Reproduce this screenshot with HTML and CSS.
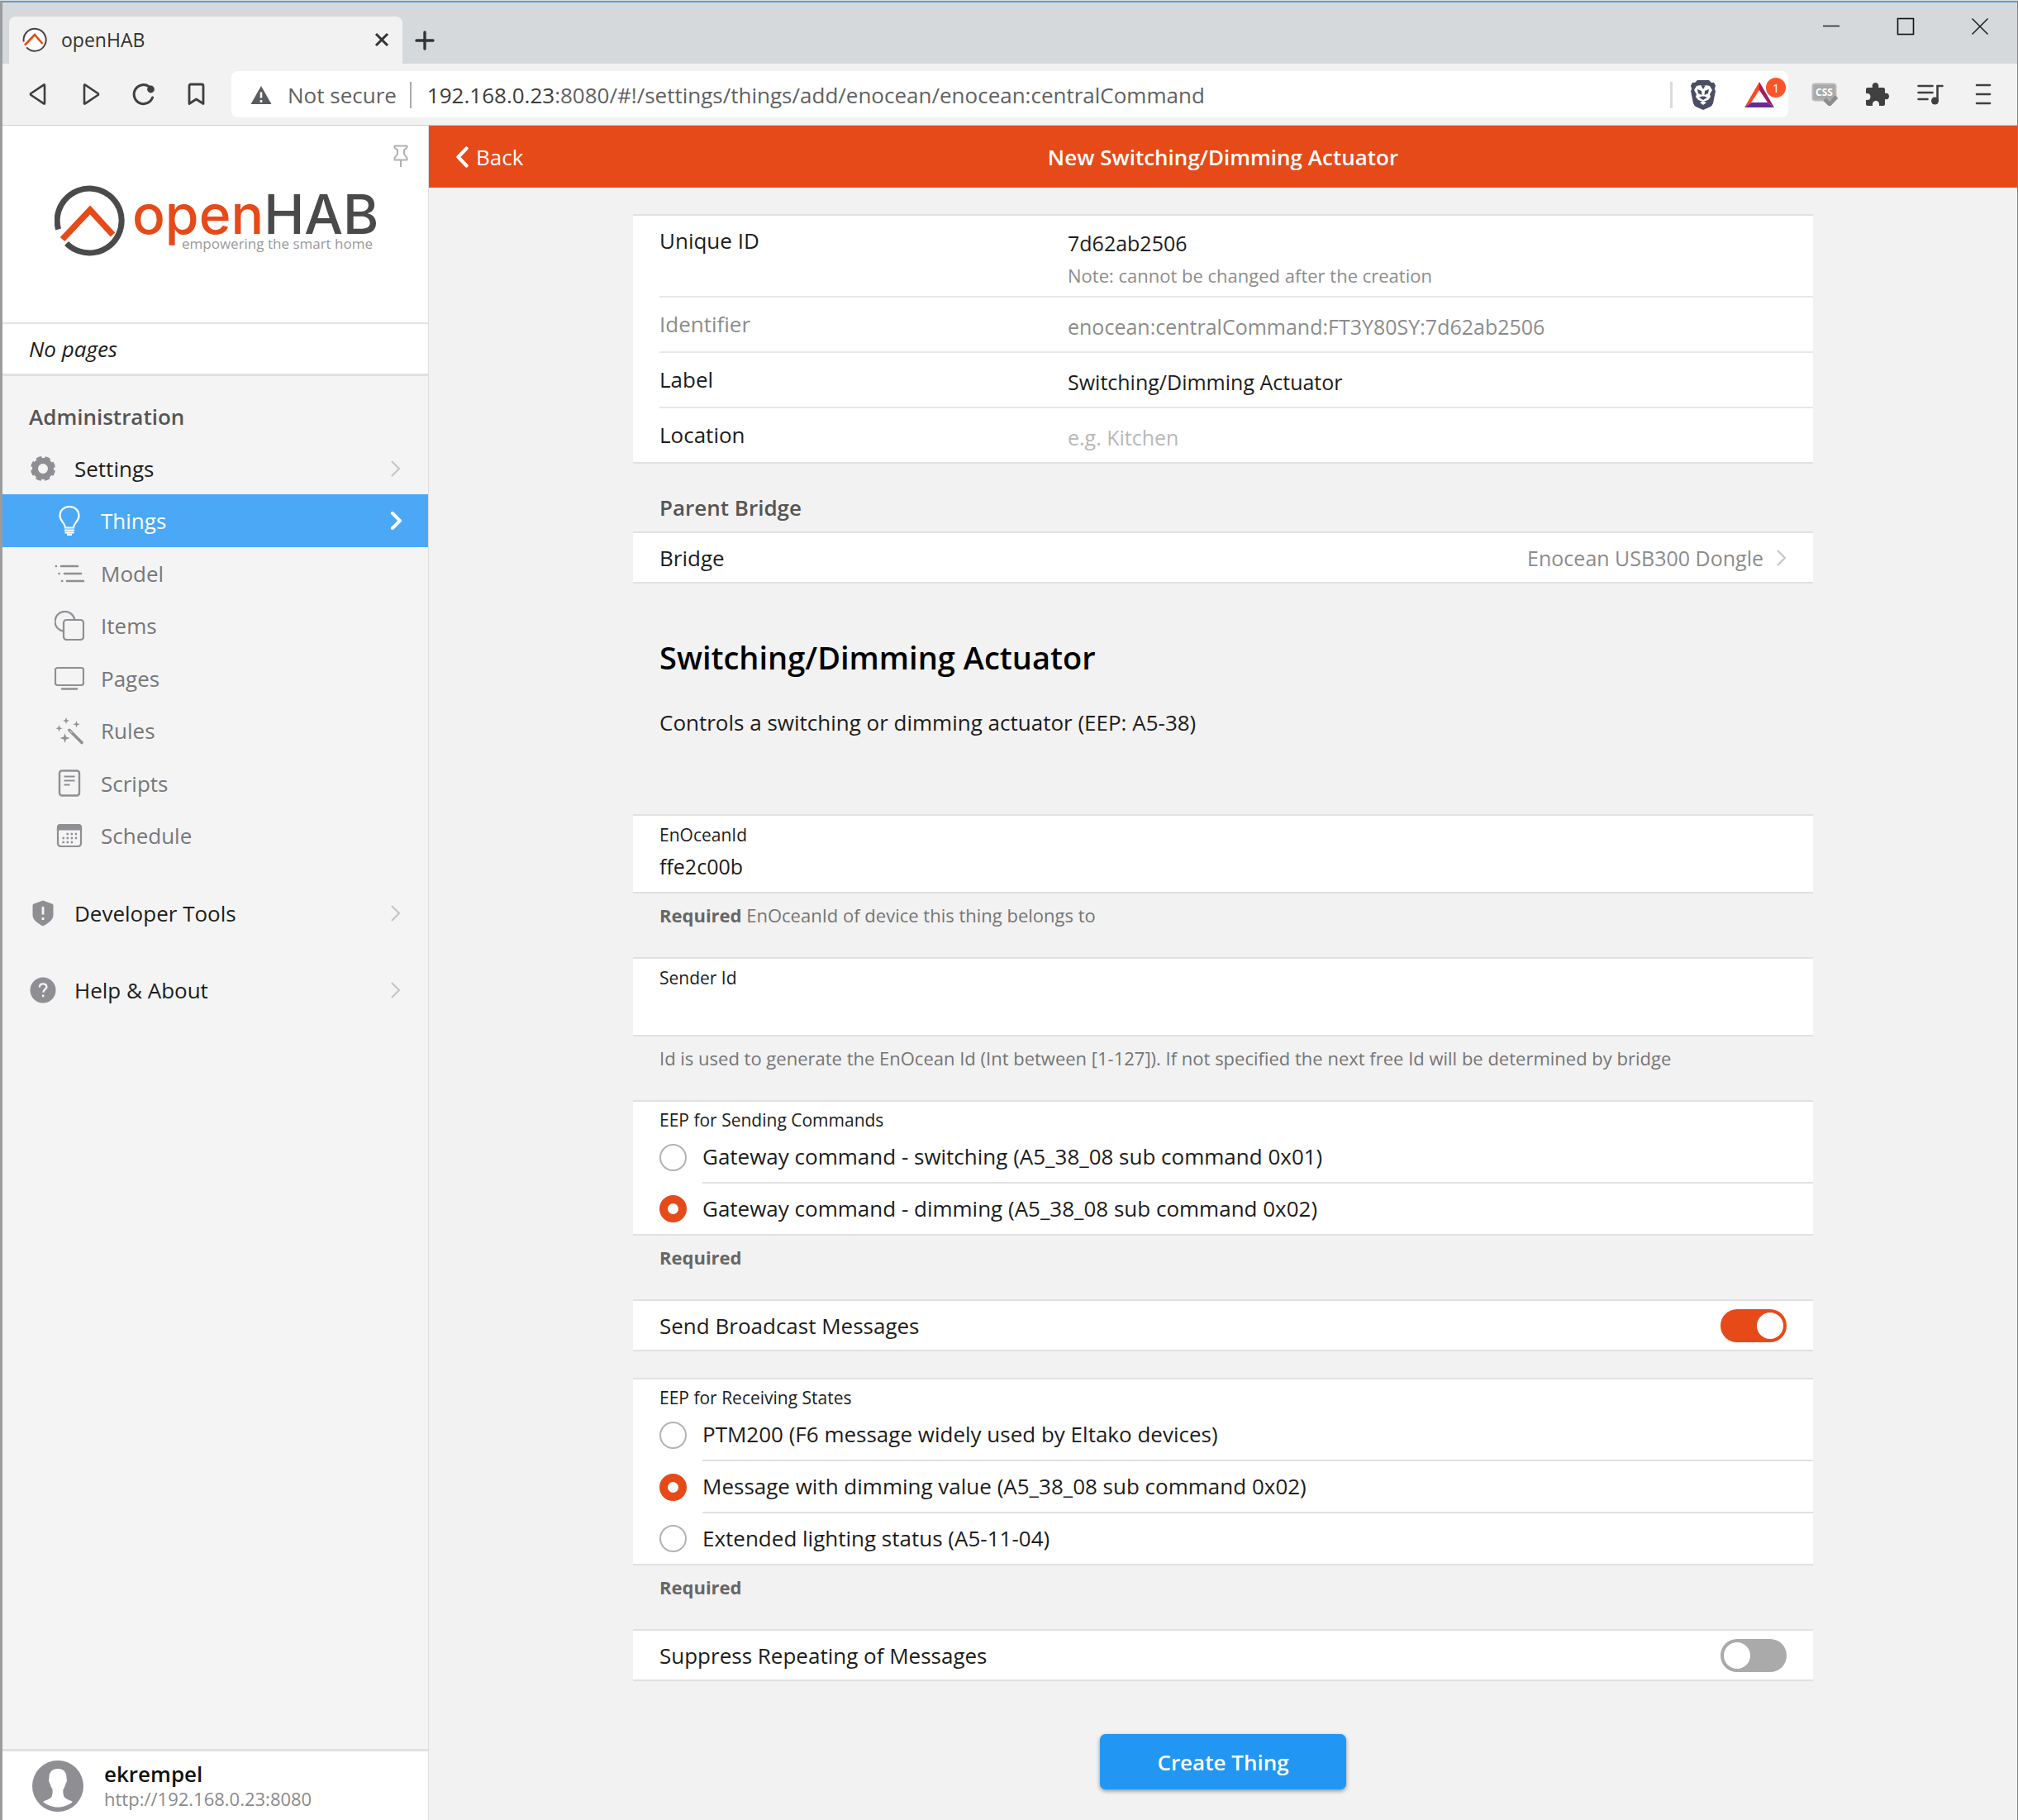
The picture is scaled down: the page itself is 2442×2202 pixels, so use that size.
FILE: index.html
```html
<!DOCTYPE html>
<html lang="en">
<head>
<meta charset="utf-8">
<meta name="viewport" content="width=device-width, initial-scale=1">
<title>openHAB</title>
<link rel="stylesheet" href="styles.css">
</head>
<body>
<div class="window">
  <header class="titlebar">
    <div class="tab">
      <svg class="favicon" viewBox="0 0 30 30" width="30" height="30" fill="none"><circle cx="15" cy="15" r="13.5" fill="#fff"/><path d="M1.8 17.5A13.5 13.5 0 1 1 5.2 24.400" stroke="#444" stroke-width="2"/><path d="M3 21.500 15 9l9.500 11" stroke="#e64a19" stroke-width="2.600"/></svg>
      <span class="tab-title">openHAB</span>
      <button class="icon-btn tab-close" aria-label="Close tab"><svg viewBox="0 0 18 18" width="18" height="18" fill="none" stroke="#333" stroke-width="3"><path d="M2 2l14 14M16 2 2 16"/></svg></button>
    </div>
    <button class="icon-btn new-tab" aria-label="New tab"><svg viewBox="0 0 24 24" width="24" height="24" fill="none" stroke="#333" stroke-width="3.400" stroke-linecap="round"><path d="M12 2v20M2 12h20"/></svg></button>
    <div class="window-controls">
      <button class="icon-btn" aria-label="Minimize"><svg viewBox="0 0 22 22" width="22" height="22" stroke="#222" stroke-width="1.500"><path d="M1 10.500h20"/></svg></button>
      <button class="icon-btn" aria-label="Maximize"><svg viewBox="0 0 22 22" width="22" height="22" fill="none" stroke="#111" stroke-width="1.600"><rect x="1.500" y="1.500" width="19" height="19"/></svg></button>
      <button class="icon-btn" aria-label="Close"><svg viewBox="0 0 22 22" width="22" height="22" stroke="#222" stroke-width="1.600"><path d="M1.500 1.500l19 19M20.500 1.500l-19 19"/></svg></button>
    </div>
  </header>

  <div class="toolbar">
    <div class="nav-buttons">
      <button class="icon-btn" aria-label="Go back"><svg viewBox="0 0 28 28" width="28" height="28" fill="none" stroke="#3f3f3f" stroke-width="2.600" stroke-linejoin="round"><path d="M22 3v22q0 1-1 .3L5.500 15q-1-1 0-2L21 2.700q1-.7 1 .3z"/></svg></button>
      <button class="icon-btn" aria-label="Go forward"><svg viewBox="0 0 28 28" width="28" height="28" fill="none" stroke="#3f3f3f" stroke-width="2.600" stroke-linejoin="round"><path d="M6 3v22q0 1 1 .3L22.500 15q1-1 0-2L7 2.700q-1-.7-1 .3z"/></svg></button>
      <button class="icon-btn" aria-label="Reload"><svg viewBox="0 0 28 28" width="28" height="28" fill="none" stroke="#3f3f3f" stroke-width="3" stroke-linecap="round"><path d="M20 4.500A11.500 11.500 0 1 0 24.500 18"/><circle cx="22.500" cy="8" r="4.400" fill="#3f3f3f" stroke="none"/></svg></button>
      <button class="icon-btn" aria-label="Bookmark"><svg viewBox="0 0 28 28" width="28" height="28" fill="none" stroke="#3f3f3f" stroke-width="2.800" stroke-linejoin="round"><path d="M5 4q0-2 2-2h13q2 0 2 2v21.500l-8.500-5.500L5 25.500z"/></svg></button>
    </div>
    <div class="address">
      <svg class="warn" viewBox="0 0 26 24" width="26" height="24"><path d="M13 1 25.500 23H.5z" fill="#5a5d60"/><path d="M13 8.500v7M13 18v3" stroke="#fff" stroke-width="2.600"/></svg>
      <span class="insecure">Not secure</span>
      <span class="divider dark"></span>
      <span class="url"><span class="host">192.168.0.23</span>:8080/#!/settings/things/add/enocean/enocean:centralCommand</span>
      <span class="divider"></span>
      <button class="icon-btn shield" aria-label="Shields">
        <svg viewBox="0 0 30 36" width="30" height="36"><path d="M8 0h14l3 3 3-.3 2 4-1.200 4L30 13l-3 15q-1 3-4 4.500L15 36l-8-3.500Q4 31 3 28L0 13l1.200-2.300L0 6.700l2-4L5 3z" fill="#4b4d62"/><path d="M7 7l5-1 3 1 3-1 5 1 3 5-3 5 1 3-3 4-6 2-6-2-3-4 1-3-3-5z" fill="#fff"/><path d="M8 11l5 2 .5 5L9 16zM22 11l-5 2-.5 5 4.500-2zM10 21l3.500-1.500h3L20 21l-5 3zM12 6l3 5 3-5-3 1z" fill="#4b4d62"/><path d="M11 27l4-1.500 4 1.500-4 3z" fill="#fff"/></svg>
      </button>
      <button class="icon-btn rewards" aria-label="Rewards">
        <svg viewBox="0 0 36 32" width="36" height="32"><path d="M18 0 0 31l8-6L18 10z" fill="#ff4724"/><path d="M18 0l18 31-8-6-10-15z" fill="#9e1f63"/><path d="M0 31h36l-8-6H8z" fill="#662d91"/></svg>
        <span class="badge">1</span>
      </button>
    </div>
    <div class="extensions">
      <button class="icon-btn" aria-label="CSS extension">
        <svg viewBox="0 0 32 28" width="32" height="28"><rect x="1.500" y="1.500" width="28" height="20" rx="3" fill="#aaa" stroke="#bbb" stroke-width="2"/><text x="15.500" y="16" text-anchor="middle" class="css-label">CSS</text><path d="M16 20l6 6 8.500-9" fill="none" stroke="#8d8d8d" stroke-width="5"/></svg>
      </button>
      <button class="icon-btn" aria-label="Extensions">
        <svg viewBox="0 0 28 28" width="28" height="28" fill="#404040"><path d="M2 6h6c-1-3 .5-6 3.500-6S16 3 15 6h6q2 0 2 2v5c3-1 5 .5 5 3.500S26 21 23 20v6q0 2-2 2h-5c.5-4-1.500-6-4-6s-4.500 2-4 6H2q-2 0-2-2v-5c4 .5 5.500-1.500 5.500-4S4 12.500 0 13V8q0-2 2-2z"/></svg>
      </button>
      <button class="icon-btn" aria-label="Playlist">
        <svg viewBox="0 0 32 28" width="32" height="28" fill="none" stroke="#404040" stroke-width="2.600" stroke-linecap="round"><path d="M1.500 4h17M1.500 12h17M1.500 20h11M24.500 22V4h6"/><circle cx="21.500" cy="22" r="4.500" fill="#404040" stroke="none"/></svg>
      </button>
      <button class="icon-btn" aria-label="Menu">
        <svg viewBox="0 0 20 28" width="20" height="28" stroke="#404040" stroke-width="2.600" stroke-linecap="round"><path d="M2 3h16M2 14h16M2 25h16"/></svg>
      </button>
    </div>
  </div>

  <div class="app">
    <aside class="sidebar">
      <div class="brand">
        <button class="icon-btn pin" aria-label="Pin sidebar"><svg viewBox="0 0 18 28" width="18" height="28" fill="none" stroke="#b0b0b0" stroke-width="2" stroke-linejoin="round"><path d="M1.500 1.500h15v2l-3.500 3v5l3.500 4.500v2.500h-15V16L5 11.500v-5l-3.500-3zM9 18.500V27"/></svg></button>
        <svg class="logo" viewBox="0 -8 410 108" width="410" height="108" role="img" aria-label="openHAB">
          <g fill="none"><path d="M4.600 55.500A39 39 0 1 1 14.500 72.500" stroke="#4a4a4a" stroke-width="7"/><path d="M9.500 67.500 43 32l27.500 30" stroke="#e64a19" stroke-width="7.500"/></g>
          <text class="logo-tag" x="154" y="79">empowering the smart home</text>
          <text class="logo-name" x="94" y="61"><tspan fill="#e64a19">open</tspan><tspan fill="#4a4a4a">HAB</tspan></text>
        </svg>
      </div>
      <p class="no-pages">No pages</p>
      <nav class="menu">
        <h2 class="menu-title">Administration</h2>
        <a href="#settings" class="item"><span class="ico"><svg viewBox="0 0 32 32" width="32" height="32" fill="none" stroke="#8e8e93"><circle cx="16" cy="16" r="9.500" stroke-width="7"/><circle cx="16" cy="16" r="12.500" stroke-width="5" stroke-dasharray="6.200 3.617" stroke-dashoffset="-1.800"/></svg></span><span class="text">Settings</span><svg class="chev" viewBox="0 0 12 20" width="12" height="20"><path d="M1.500 1.500 10 10l-8.500 8.500"/></svg></a>
        <div class="submenu">
          <a href="#things" class="item active" aria-current="page"><span class="ico"><svg viewBox="0 0 36 36" width="36" height="36" fill="none" stroke="#fff" stroke-width="2.200"><path d="M13 26.500c0-6-6.500-7.500-6.500-14.500C6.500 5.500 11.500 1 18 1s11.500 4.500 11.500 11c0 7-6.500 8.500-6.500 14.500z"/><path d="M12 29.500h12M12.500 32.300h11M15 34.800h6"/></svg></span><span class="text">Things</span><svg class="chev" viewBox="0 0 13 22" width="13" height="22"><path d="M2 2l9 9-9 9"/></svg></a>
          <a href="#model" class="item"><span class="ico"><svg viewBox="0 0 36 36" width="36" height="36" fill="none" stroke="#8e8e93" stroke-width="2.600" stroke-linecap="round"><path d="M8 9h20M12 18h20M15 27h20M1.800 9h.2M5.500 18h.2M9 27h.2"/></svg></span><span class="text">Model</span></a>
          <a href="#items" class="item"><span class="ico"><svg viewBox="0 0 36 36" width="36" height="36" fill="none" stroke="#8e8e93" stroke-width="2.200"><rect x="11" y="11" width="24" height="24" rx="3.500"/><path d="M10.500 24.700A12 12 0 1 1 24.300 10.500"/></svg></span><span class="text">Items</span></a>
          <a href="#pages" class="item"><span class="ico"><svg viewBox="0 0 36 36" width="36" height="36" fill="none" stroke="#8e8e93" stroke-width="2.200" stroke-linecap="round"><rect x="1" y="5" width="34" height="21" rx="2.500"/><path d="M9 30.500h18" stroke-width="2.600"/></svg></span><span class="text">Pages</span></a>
          <a href="#rules" class="item"><span class="ico"><svg viewBox="0 0 36 36" width="36" height="36" fill="#8e8e93"><path d="M14 2l1 3 3 1-3 1-1 3-1-3-3-1 3-1zM26.500 6l1 3.200 3.200 1-3.200 1-1 3.200-1-3.200-3.200-1 3.200-1zM5.500 11l1 3.200 3.200 1-3.200 1-1 3.200-1-3.200-3.200-1 3.200-1zM12.500 21l1.400 4.600L18.500 27l-4.600 1.400L12.500 33l-1.400-4.600L6.500 27l4.600-1.400z"/><path d="M18 17.500 33 32.500" stroke="#8e8e93" stroke-width="3.600" stroke-linecap="round"/><path d="M18.500 18l3 3" stroke="#f4f4f4" stroke-width="1"/></svg></span><span class="text">Rules</span></a>
          <a href="#scripts" class="item"><span class="ico"><svg viewBox="0 0 36 36" width="36" height="36" fill="none" stroke="#8e8e93" stroke-width="2.400"><rect x="6" y="2.500" width="24" height="30" rx="3"/><path d="M11.500 9.500h13M11.500 14.500h13M11.500 19.500h7" stroke-width="2"/></svg></span><span class="text">Scripts</span></a>
          <a href="#schedule" class="item"><span class="ico"><svg viewBox="0 0 36 36" width="36" height="36" fill="none" stroke="#8e8e93" stroke-width="2.200"><rect x="4" y="5" width="28" height="26" rx="3.500"/><path d="M4 10.500V8q0-3 3-3h22q3 0 3 3v2.500z" fill="#8e8e93"/><path d="M14.500 16h13M9.500 21h18M9.500 26h13" stroke-width="2.400" stroke-dasharray="2.400 2.700"/></svg></span><span class="text">Schedule</span></a>
        </div>
        <a href="#developer" class="item spaced"><span class="ico"><svg viewBox="0 0 32 32" width="32" height="32"><path d="M16 .5l11 4q1.500.5 1.500 2V18c0 6-6 10-12.500 13.500C9.500 28 3.500 24 3.500 18V6.500q0-1.500 1.500-2z" fill="#8e8e93"/><path d="M16 8v9.500M16 21v3" stroke="#f4f4f4" stroke-width="2.800"/></svg></span><span class="text">Developer Tools</span><svg class="chev" viewBox="0 0 12 20" width="12" height="20"><path d="M1.500 1.500 10 10l-8.500 8.500"/></svg></a>
        <a href="#help" class="item spaced"><span class="ico"><svg viewBox="0 0 32 32" width="32" height="32" fill="none"><circle cx="16" cy="16" r="15.500" fill="#8e8e93"/><path d="M11.800 12.500c.2-5.500 8.600-5.300 8.600-.5 0 3.200-4.200 3.300-4.200 6.800M16.200 21.500v2.800" stroke="#f4f4f4" stroke-width="2.400"/></svg></span><span class="text">Help &amp; About</span><svg class="chev" viewBox="0 0 12 20" width="12" height="20"><path d="M1.500 1.500 10 10l-8.500 8.500"/></svg></a>
      </nav>
      <a href="#profile" class="user">
        <svg viewBox="0 0 62 62" width="62" height="62"><circle cx="31" cy="31" r="31" fill="#8e8e93"/><path d="M31 10c8 0 11 5 10.500 12 1 1 .5 4-1 6-1 4-2 5-3 7-.5 4 0 8 2 10 2.500 2.500 7 3 9.500 5-5 4-11 6.500-18 6.500S18 54 13 50c2.500-2 7-2.500 9.500-5 2-2 2.500-6 2-10-1-2-2-3-3-7-1.500-2-2-5-1-6C20 15 23 10 31 10z" fill="#fff"/></svg>
        <span class="user-text"><strong>ekrempel</strong><span>http://192.168.0.23:8080</span></span>
      </a>
    </aside>

    <main class="page">
      <div class="navbar">
        <a href="#back" class="back"><svg viewBox="0 0 16 26" width="16" height="26" fill="none" stroke="#fff" stroke-width="4.200" stroke-linecap="round" stroke-linejoin="round"><path d="M13.500 2.500 3.500 13l10 10.500"/></svg>Back</a>
        <h1>New Switching/Dimming Actuator</h1>
      </div>
      <form class="content">
        <div class="list fields">
          <div class="field">
            <label for="uid">Unique ID</label>
            <div class="value"><input id="uid" type="text" value="7d62ab2506"><p class="note">Note: cannot be changed after the creation</p></div>
          </div>
          <div class="field">
            <label for="ident" class="muted">Identifier</label>
            <div class="value"><input id="ident" type="text" value="enocean:centralCommand:FT3Y80SY:7d62ab2506" disabled></div>
          </div>
          <div class="field">
            <label for="label">Label</label>
            <div class="value"><input id="label" type="text" value="Switching/Dimming Actuator"></div>
          </div>
          <div class="field">
            <label for="location">Location</label>
            <div class="value"><input id="location" type="text" placeholder="e.g. Kitchen"></div>
          </div>
        </div>

        <h2 class="block-title">Parent Bridge</h2>
        <div class="list">
          <a href="#bridge" class="row"><span>Bridge</span><span class="after">Enocean USB300 Dongle<svg class="chev" viewBox="0 0 12 20" width="12" height="20"><path d="M1.500 1.500 10 10l-8.500 8.500"/></svg></span></a>
        </div>

        <section class="intro">
          <h2>Switching/Dimming Actuator</h2>
          <p>Controls a switching or dimming actuator (EEP: A5-38)</p>
        </section>

        <div class="list stacked">
          <label class="small" for="enocean">EnOceanId</label>
          <input id="enocean" type="text" value="ffe2c00b">
        </div>
        <p class="footer"><b>Required</b> EnOceanId of device this thing belongs to</p>

        <div class="list stacked spaced">
          <label class="small" for="sender">Sender Id</label>
          <input id="sender" type="text">
        </div>
        <p class="footer">Id is used to generate the EnOcean Id (Int between [1-127]). If not specified the next free Id will be determined by bridge</p>

        <fieldset class="list options spaced">
          <legend class="small">EEP for Sending Commands</legend>
          <label class="option"><input type="radio" name="send"><span>Gateway command - switching (A5_38_08 sub command 0x01)</span></label>
          <label class="option"><input type="radio" name="send" checked><span>Gateway command - dimming (A5_38_08 sub command 0x02)</span></label>
        </fieldset>
        <p class="footer"><b>Required</b></p>

        <div class="list spaced">
          <label class="row">Send Broadcast Messages<input type="checkbox" class="switch" checked></label>
        </div>

        <fieldset class="list options spaced">
          <legend class="small">EEP for Receiving States</legend>
          <label class="option"><input type="radio" name="recv"><span>PTM200 (F6 message widely used by Eltako devices)</span></label>
          <label class="option"><input type="radio" name="recv" checked><span>Message with dimming value (A5_38_08 sub command 0x02)</span></label>
          <label class="option"><input type="radio" name="recv"><span>Extended lighting status (A5-11-04)</span></label>
        </fieldset>
        <p class="footer"><b>Required</b></p>

        <div class="list spaced">
          <label class="row">Suppress Repeating of Messages<input type="checkbox" class="switch"></label>
        </div>

        <button type="button" class="create">Create Thing</button>
      </form>
    </main>
  </div>
</div>
</body>
</html>
```

FILE: styles.css
```css
:root {
  --accent: #e64a19;
  --line: #e1e1e1;
  --gray: #8e8e93;
  --fs-body: 26px;
  --fs-input: 25px;
  --fs-note: 22px;
  --fs-small: 21px;
}

* { box-sizing: border-box; }

body {
  margin: 0;
  padding-top: 1px;
  background: #dadcdc;
  font-family: "Open Sans", "Noto Sans", sans-serif;
  font-size: var(--fs-body);
  color: #1c1c1c;
}

h1, h2, p { margin: 0; }
a { color: inherit; text-decoration: none; }
svg { display: block; flex: none; }
input, button { font-family: inherit; }

.window {
  display: flex;
  flex-direction: column;
  min-height: calc(100vh - 1px);
  border-top: 2px solid #5b9fd8;
  border-left: 3px solid #9b9c9e;
  border-right: 1px solid #7d7f82;
  background: #f2f2f2;
}

.icon-btn {
  display: flex;
  align-items: center;
  justify-content: center;
  padding: 0;
  border: 0;
  background: none;
}

/* Browser chrome */
.titlebar {
  display: flex;
  height: 74px;
  padding-left: 8px;
  background: #d5d9dc;
}
.tab {
  display: flex;
  align-items: center;
  width: 476px;
  margin-top: 17px;
  padding: 0 16px 2px;
  border-radius: 8px 8px 0 0;
  background: #f2f2f2;
}
.tab-title {
  flex: 1;
  margin-left: 17px;
  font-size: 23px;
  color: #333;
}
.new-tab { width: 54px; margin: 17px 0 0 0; }
.window-controls { display: flex; margin-left: auto; }
.window-controls .icon-btn { width: 90px; height: 58px; }

.toolbar {
  display: flex;
  align-items: center;
  height: 75px;
  padding: 0 9px 0 11px;
  border-bottom: 1px solid #c9d0d5;
}
.nav-buttons, .extensions { display: flex; }
.nav-buttons .icon-btn, .extensions .icon-btn { width: 64px; height: 56px; }
.address {
  display: flex;
  align-items: center;
  flex: 1;
  height: 56px;
  margin: 0 12px 0 10px;
  padding: 2px 3px 0 23px;
  border-radius: 8px;
  background: #fff;
  color: #616161;
}
.insecure { margin: 0 16px 0 19px; }
.divider { width: 3px; height: 32px; background: #dcdcdc; }
.divider.dark { width: 2px; background: #a9a9a9; }
.url { flex: 1; margin-left: 19px; }
.host { color: #3c3c3c; }
.shield { margin-left: 22px; }
.rewards { position: relative; width: 50px; margin-left: 35px; justify-content: flex-start; }
.badge {
  position: absolute;
  top: -5px;
  right: 0;
  width: 24px;
  border-radius: 12px;
  background: #fb542b;
  color: #fff;
  font-size: 15px;
  line-height: 24px;
}
.css-label { font: bold 12px "Open Sans", sans-serif; fill: #fff; }

/* Sidebar */
.app { display: flex; flex: 1; }
.sidebar {
  display: flex;
  flex-direction: column;
  flex: 0 0 516px;
  border-right: 1px solid #dedede;
  background: #f4f4f4;
}
.brand {
  display: flex;
  flex-direction: column;
  height: 240px;
  padding: 23px 24px 0 63px;
  border-bottom: 2px solid #e4e4e4;
  background: #fff;
}
.pin { align-self: flex-end; }
.logo { margin-top: 11px; }
.logo-name { font: 500 66px Inter, sans-serif; }
.logo-tag { font: 17px "Open Sans", sans-serif; fill: #999; }
.no-pages {
  padding-left: 32px;
  border-bottom: 3px solid var(--line);
  background: #fff;
  font-style: italic;
  line-height: 60px;
}
.menu { flex: 1; padding-top: 29px; }
.menu-title {
  padding-left: 32px;
  font-size: var(--fs-body);
  font-weight: 600;
  line-height: 40px;
  color: #555;
}
.menu-title + .item { margin-top: 11px; }
.item {
  display: flex;
  align-items: center;
  height: 63px;
  padding: 0 33px 0 33px;
}
.item .text { flex: 1; margin-left: 22px; }
.submenu .item { padding-left: 63px; color: #77777b; }
.submenu .item .text { margin-left: 20px; }
.submenu .item:nth-child(odd) { height: 64px; }
.submenu .item.active { padding-right: 32px; background: #4aa8f7; color: #fff; font-weight: 500; }
.item.spaced { margin-top: 30px; }
.chev { fill: none; stroke: #c4c4c6; stroke-width: 2; stroke-linecap: round; }
.active .chev { stroke: #fff; stroke-width: 4; }
.user {
  display: flex;
  align-items: center;
  height: 86px;
  padding-left: 36px;
  border-top: 3px solid var(--line);
  background: #fff;
}
.user-text {
  display: flex;
  flex-direction: column;
  margin-left: 25px;
  font-size: var(--fs-note);
  line-height: 30px;
  color: #8a8a8a;
}
.user-text strong { font-size: var(--fs-body); font-weight: 600; color: #111; }

/* Page */
.page { flex: 1; min-width: 0; }
.navbar {
  display: grid;
  grid-template-columns: 1fr auto 1fr;
  align-items: center;
  height: 75px;
  padding: 0 32px;
  background: var(--accent);
  color: #fff;
}
.back { display: flex; align-items: center; gap: 9px; }
.navbar h1 { font-size: var(--fs-body); font-weight: 600; }

.content {
  display: flex;
  flex-direction: column;
  max-width: 1428px;
  margin: 32px auto;
}
.list {
  min-width: 0;
  margin: 0;
  padding: 0 0 0 32px;
  border: solid var(--line);
  border-width: 2px 0;
  background: #fff;
}
.list.spaced { margin-top: 32px; }

.list input[type="text"] {
  display: block;
  width: 100%;
  padding: 0;
  border: 0;
  outline: 0;
  background: none;
  font-size: var(--fs-input);
  color: #1c1c1c;
}
.list input::placeholder { color: #b8b8b8; }
.list input:disabled { color: #8c8c8c; }

.field { display: flex; border-bottom: 2px solid #e8e8e8; }
.field:last-child { border-bottom: 0; }
.field label { flex: 0 0 494px; line-height: 65px; }
.field:first-child label { line-height: 61px; }
.field:first-child .value { padding-top: 2px; }
.field .muted { color: #8c8c8c; }
.value { flex: 1; padding-top: 4px; }
.value input[type="text"] { height: 61px; }
.note { padding-bottom: 16px; font-size: var(--fs-note); line-height: 18px; color: #8c8c8c; }

.block-title {
  padding: 34px 32px 10px;
  font-size: var(--fs-body);
  font-weight: 600;
  line-height: 38px;
  color: #555;
}
.row {
  display: flex;
  align-items: center;
  justify-content: space-between;
  min-height: 59px;
  padding-right: 32px;
}
.after { display: flex; align-items: center; gap: 16px; font-size: var(--fs-input); color: #8c8c8c; }

.intro { padding: 65px 32px 91px; }
.intro h2 { font-size: 38px; font-weight: 600; line-height: 48px; color: #000; }
.intro p { margin-top: 35px; line-height: 40px; }

.small { display: block; padding: 10px 0 0; font-size: var(--fs-small); line-height: 26px; }
.stacked input[type="text"] { height: 50px; margin-bottom: 6px; }
.footer {
  padding: 10px 32px 2px;
  font-size: var(--fs-note);
  line-height: 33px;
  color: #757575;
}
.footer b { font-weight: 700; color: #666; }

.options legend { float: left; width: 100%; padding: 9px 0 1px; }
.option { display: flex; align-items: center; clear: both; gap: 19px; }
.option span { flex: 1; border-bottom: 2px solid var(--line); line-height: 61px; }
.option:last-child span { border-bottom: 0; }
.option input {
  appearance: none;
  width: 33px;
  height: 33px;
  margin: 0;
  border: 2px solid #b3b3b3;
  border-radius: 50%;
}
.option input:checked { border: 10px solid var(--accent); }

.switch {
  appearance: none;
  display: flex;
  width: 80px;
  height: 40px;
  margin: 0;
  padding: 4px;
  border-radius: 20px;
  background: #aaa;
}
.switch::before { content: ""; width: 32px; height: 32px; border-radius: 50%; background: #fff; }
.switch:checked { justify-content: flex-end; background: var(--accent); }

.create {
  align-self: center;
  width: 298px;
  height: 67px;
  margin-top: 64px;
  border: 0;
  border-radius: 7px;
  background: #2196f3;
  box-shadow: 0 2px 5px rgba(0, 0, 0, .4);
  color: #fff;
  font-size: var(--fs-body);
  font-weight: 600;
}
```
